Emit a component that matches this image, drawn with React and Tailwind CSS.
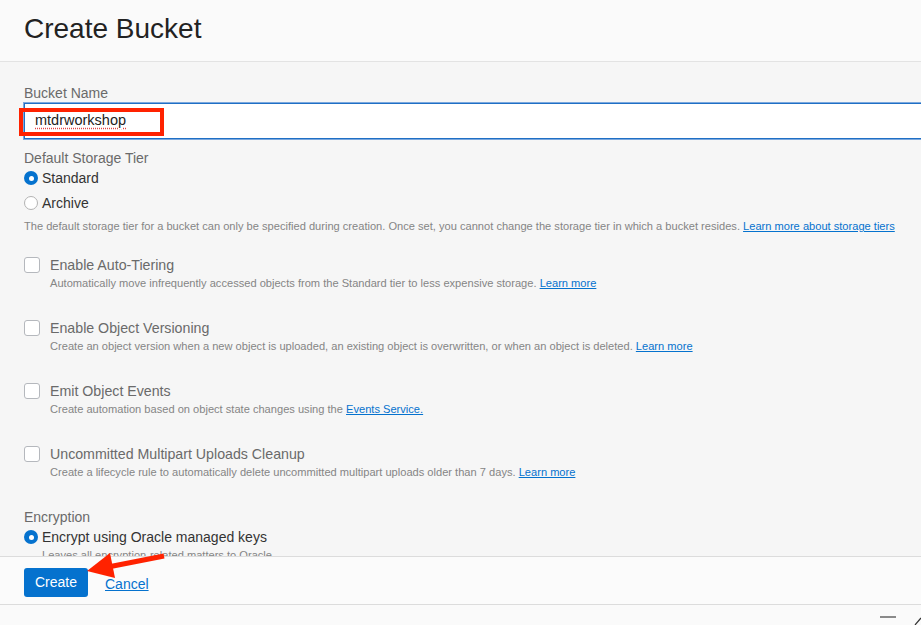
import React from "react";

const font = { fontFamily: '"Liberation Sans", Arial, sans-serif' };

function Radio({ checked, label }) {
  return (
    <div className="flex items-center h-[18px]">
      {checked ? (
        <span className="w-[14px] h-[14px] rounded-full bg-[#0572ce] flex items-center justify-center">
          <span className="w-[5px] h-[5px] rounded-full bg-white" />
        </span>
      ) : (
        <span className="w-[14px] h-[14px] rounded-full bg-white border border-[#b3b3b3]" />
      )}
      <span className="ml-[4px] text-[14px] text-[#333]">{label}</span>
    </div>
  );
}

function CheckRow({ title, desc, link, className = "" }) {
  return (
    <div className={"flex " + className}>
      <span className="mt-[1px] w-[16px] h-[16px] rounded-[3px] bg-white border border-[#b5b8bd] shrink-0" />
      <div className="ml-[10px]">
        <div className="text-[14.2px] leading-[18px] text-[#6a6a6a]">{title}</div>
        <div className="mt-[2px] text-[11.1px] leading-[14px] text-[#858585]">
          {desc}{" "}
          {link && <a className="text-[#0572ce] underline">{link}</a>}
        </div>
      </div>
    </div>
  );
}

export default function App() {
  return (
    <div className="relative w-[921px] h-[625px] overflow-hidden bg-[#fafafa]" style={font}>
      <div className="h-[62px] bg-[#fafafa] border-b border-[#e3e3e3] flex items-center px-6 pb-[4px]">
        <h1 className="text-[28px] text-[#222] leading-none">Create Bucket</h1>
      </div>
      <div className="h-[494px] overflow-hidden bg-[#f6f6f6] pl-6 pt-[23px]">
        <div className="text-[14px] leading-[17px] text-[#6a6a6a]">Bucket Name</div>
        <div className="relative h-[36px] mt-[1px] w-[calc(100%+20px)] bg-white border border-[#1f6fc5] shadow-[0_0_0_1px_#7ca8dd] flex items-center pl-[10px]">
          <span className="text-[14.5px] text-[#222] underline decoration-dotted decoration-[#e54545] underline-offset-[3px]">
            mtdrworkshop
          </span>
        </div>
        <div className="mt-[10px] text-[14px] leading-[18px] text-[#6a6a6a]">Default Storage Tier</div>
        <div className="mt-[2px] flex flex-col gap-[7px]">
          <Radio checked label="Standard" />
          <Radio label="Archive" />
        </div>
        <div className="mt-[7px] text-[11.1px] leading-[14px] text-[#858585] whitespace-nowrap">
          The default storage tier for a bucket can only be specified during creation. Once set, you cannot change the storage tier in which a bucket resides.{" "}
          <a className="text-[#0572ce] underline">Learn more about storage tiers</a>
        </div>
        <div className="mt-[23px] flex flex-col gap-[29px]">
          <CheckRow
            title="Enable Auto-Tiering"
            desc="Automatically move infrequently accessed objects from the Standard tier to less expensive storage."
            link="Learn more"
          />
          <CheckRow
            title="Enable Object Versioning"
            desc="Create an object version when a new object is uploaded, an existing object is overwritten, or when an object is deleted."
            link="Learn more"
          />
          <CheckRow
            title="Emit Object Events"
            desc="Create automation based on object state changes using the"
            link="Events Service."
          />
          <CheckRow
            title="Uncommitted Multipart Uploads Cleanup"
            desc="Create a lifecycle rule to automatically delete uncommitted multipart uploads older than 7 days."
            link="Learn more"
          />
        </div>
        <div className="mt-[29px] text-[14px] leading-[18px] text-[#6a6a6a]">Encryption</div>
        <div className="mt-[2px]">
          <Radio checked label="Encrypt using Oracle managed keys" />
        </div>
        <div className="mt-[2px] ml-[18px] text-[11.1px] leading-[14px] text-[#858585]">
          Leaves all encryption-related matters to Oracle
        </div>
      </div>
      <div className="h-[49px] bg-[#fbfbfb] border-t border-b border-[#dcdcdc] flex items-start pl-6 pt-[11px]">
        <button className="w-[64px] h-[29px] rounded-[3px] bg-[#0572ce] text-white text-[14px]">Create</button>
        <a className="ml-[17px] mt-[6px] text-[14px] text-[#0572ce] underline">Cancel</a>
      </div>
      <div className="h-[20px] bg-[#fafafa] flex justify-end items-start pt-[11px]">
        <span className="w-[16px] h-[2px] bg-[#8a8a8a] mr-[25px]" />
      </div>

      {/* annotation: red box */}
      <div className="absolute left-[19px] top-[108px] w-[145px] h-[28px] border-[4px] border-[#ff2200]" />
      {/* annotation: red arrow */}
      <svg className="absolute left-0 top-0 pointer-events-none" width="921" height="625">
        <line x1="164" y1="556" x2="108" y2="567" stroke="#ff2200" strokeWidth="5" />
        <polygon points="87,571 110,553 115,578" fill="#ff2200" />
        <line x1="915" y1="625" x2="921" y2="618" stroke="#333" strokeWidth="1.2" />
      </svg>
    </div>
  );
}
